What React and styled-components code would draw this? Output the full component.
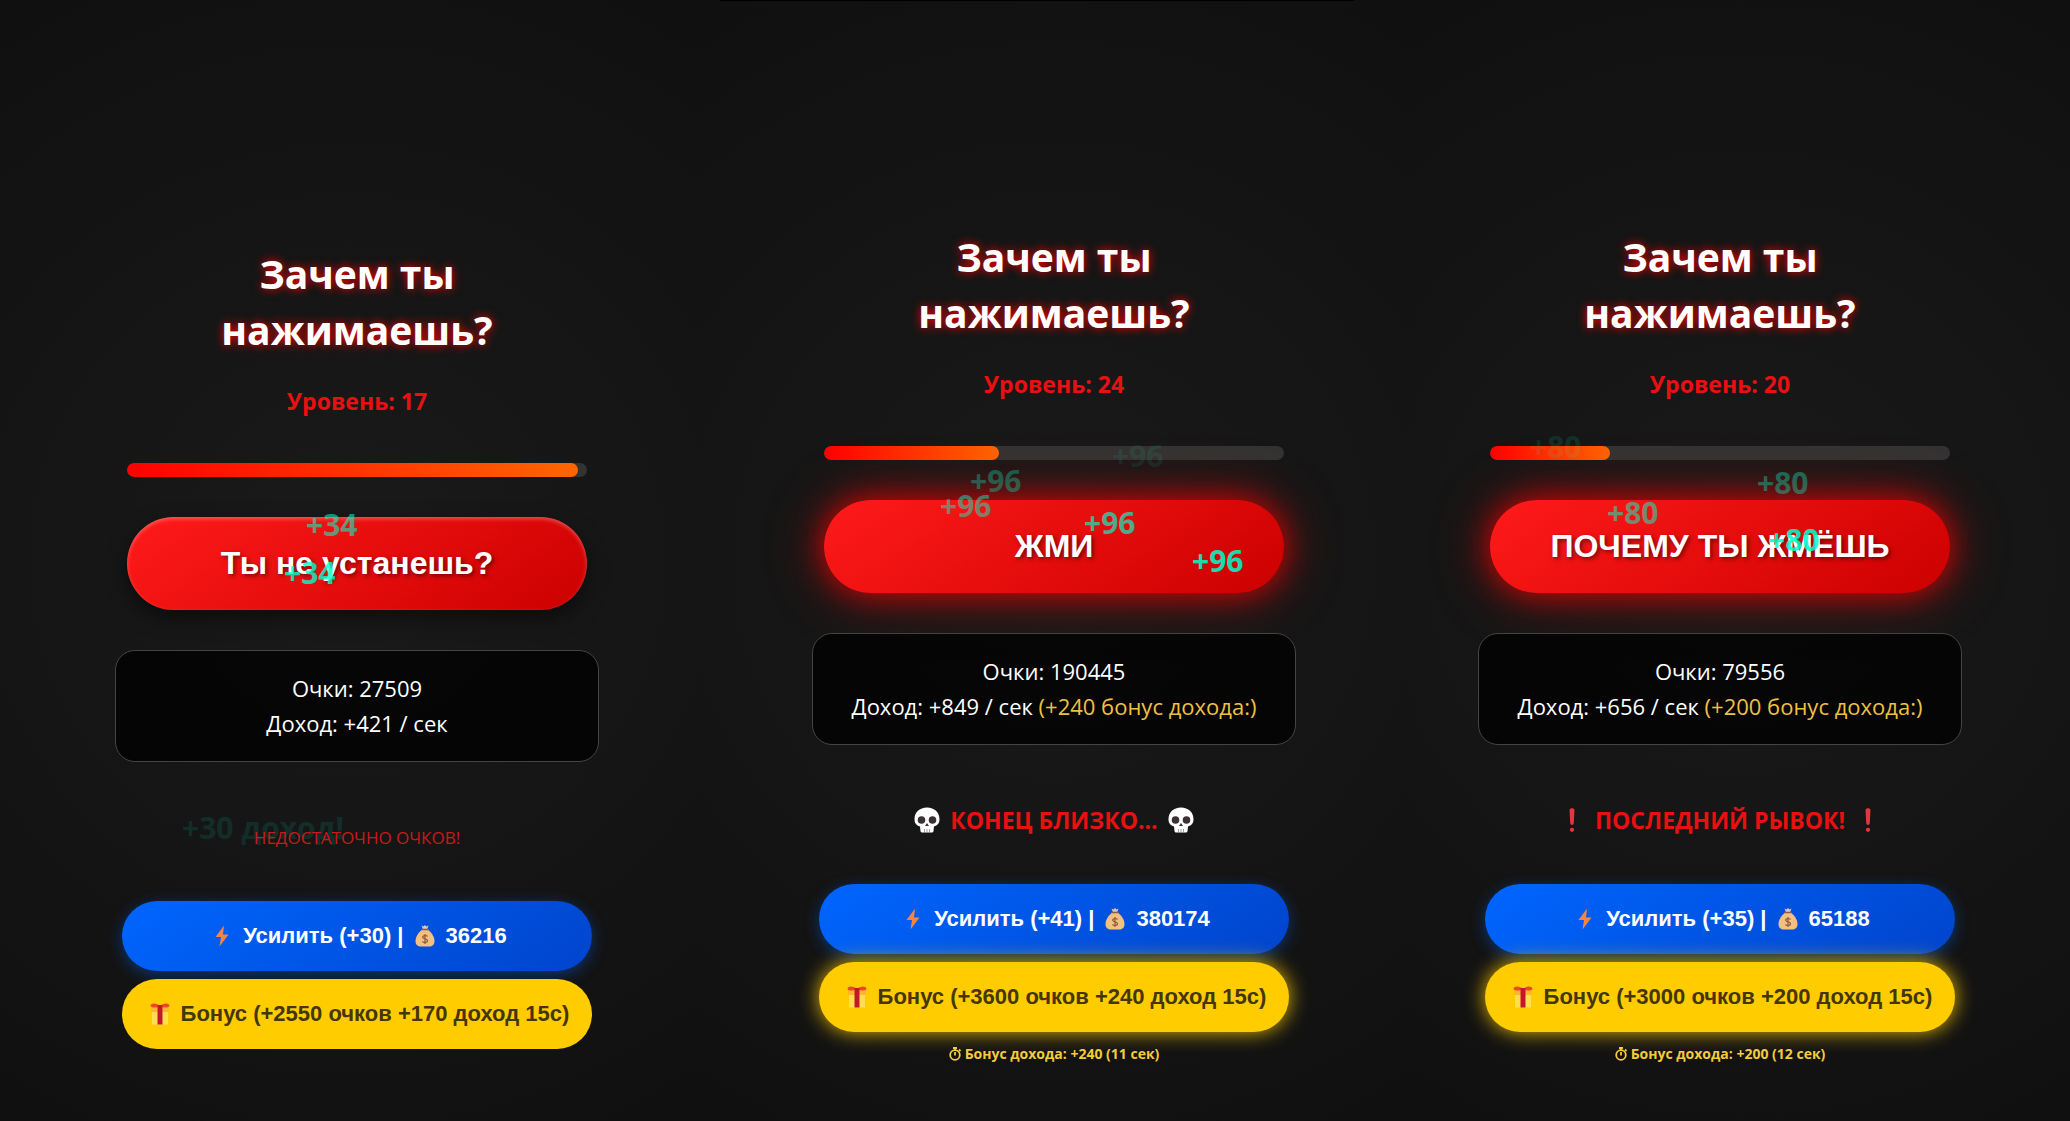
import React from "react";
import styled, { createGlobalStyle, css } from "styled-components";

const GlobalStyle = createGlobalStyle`
  * { box-sizing: border-box; }
  body {
    margin: 0;
    background: #101010;
    color: #fff;
    font-family: "Segoe UI", "Open Sans", "Noto Sans", sans-serif;
  }
`;

const Page = styled.main`
  display: grid;
  grid-template-columns: 696fr 716fr 658fr;
  min-height: 100vh;
  overflow: hidden;
`;

const edgeLine = "linear-gradient(#000, #000) 24px 0 / calc(100% - 82px) 1px no-repeat,";

const Panel = styled.section`
  display: flex;
  flex-direction: column;
  align-items: center;
  justify-content: center;
  padding: 174px ${(p) => p.$right || 0}px 0 ${(p) => p.$left || 0}px;
  background: ${(p) => (p.$edge ? edgeLine : "")} radial-gradient(circle at center, #1a1a1a, #101010);
`;

const Game = styled.div`
  position: relative;
  display: flex;
  flex-direction: column;
  align-items: center;
  width: 484px;
  max-width: 100%;
`;

const Title = styled.h1`
  margin: 0;
  width: 340px;
  font-size: 39px;
  line-height: 56px;
  font-weight: 700;
  text-align: center;
  text-shadow: 0 0 10px #ff0000;
`;

const Level = styled.p`
  margin: 27px 0 46px;
  font-size: 23px;
  line-height: 32px;
  font-weight: 700;
  color: #e81010;
`;

const Track = styled.div`
  width: 460px;
  height: 14px;
  border-radius: 10px;
  background: #333;
  overflow: hidden;
`;

const Fill = styled.div`
  height: 100%;
  border-radius: 10px;
  background: linear-gradient(90deg, #ff0000, #ff6600);
`;

const calm = css`
  box-shadow: 0 8px 20px rgba(0, 0, 0, 0.5), inset 0 2px 4px rgba(255, 255, 255, 0.3);
`;

const furious = css`
  box-shadow: 0 0 30px rgba(255, 0, 0, 0.75), 0 0 60px rgba(255, 0, 0, 0.4);
`;

const PressButton = styled.button`
  width: 460px;
  height: 93px;
  margin: 40px 0;
  border: 0;
  border-radius: 47px;
  background: linear-gradient(145deg, #ff1a1a, #cc0000);
  color: #fff;
  font: 700 32px "Liberation Sans", Arial, sans-serif;
  text-shadow: 2px 2px 4px rgba(0, 0, 0, 0.5);
  cursor: pointer;
  ${(p) => (p.$furious ? furious : calm)}
`;

const Stats = styled.div`
  width: 100%;
  padding: 20px;
  border: 1px solid #444;
  border-radius: 20px;
  background: rgba(0, 0, 0, 0.75);
  font-size: 22px;
  line-height: 35px;
  text-align: center;
  z-index: 1;
`;

const Extra = styled.span`
  color: #f0c040;
`;

const Message = styled.p`
  display: flex;
  align-items: center;
  gap: 7px;
  height: 64px;
  margin: 43px 0 32px;
  color: ${(p) => (p.$loud ? "#e81010" : "#c81a1a")};
  font-size: ${(p) => (p.$loud ? 23 : 17)}px;
  font-weight: ${(p) => (p.$loud ? 700 : 400)};
  white-space: nowrap;
  z-index: 1;
`;

const ShopButton = styled.button`
  display: flex;
  align-items: center;
  justify-content: center;
  gap: 6px;
  width: 470px;
  height: 70px;
  border: 0;
  border-radius: 35px;
  font: 700 22px "Liberation Sans", Arial, sans-serif;
  white-space: nowrap;
  cursor: pointer;
`;

const UpgradeButton = styled(ShopButton)`
  background: linear-gradient(145deg, #0066ff, #0044cc);
  color: #fff;
  box-shadow: 0 4px 15px rgba(0, 102, 255, 0.4);
`;

const BonusButton = styled(ShopButton)`
  margin-top: 8px;
  background: #ffcc00;
  color: #443606;
  box-shadow: ${(p) => (p.$active ? "0 0 20px rgba(255, 204, 0, 0.9)" : "none")};
`;

const Note = styled.p`
  display: flex;
  align-items: center;
  gap: 4px;
  margin: 10px 0 0;
  color: #f5cb3a;
  font-size: 14px;
  line-height: 24px;
  font-weight: 700;
`;

const Pop = styled.span`
  position: absolute;
  left: ${(p) => p.$x}px;
  top: ${(p) => p.$y}px;
  color: #00ffcc;
  font-size: 30px;
  line-height: 36px;
  font-weight: 700;
  white-space: nowrap;
  pointer-events: none;
  opacity: ${(p) => p.$fade};
`;

const Emoji = styled.svg`
  flex: none;
  width: ${(p) => p.$w}px;
  height: ${(p) => p.$h}px;
`;

const Bolt = () => (
  <Emoji $w={30} $h={22} viewBox="0 0 30 22" aria-hidden="true">
    <path d="M17 0.500 8.500 12 H14 L12.500 21.500 21.500 9.500 H16 Z" fill="#f58446" />
  </Emoji>
);

const MoneyBag = () => (
  <Emoji $w={30} $h={22} viewBox="0 0 30 22" aria-hidden="true">
    <path d="M11.500 0.500 13.500 1.500 15 0 16.500 1.500 18.500 0.500 17 4.500 H13 Z" fill="#d9c7bd" />
    <path d="M13 4 H17 C20.500 6.500 24.500 11 24.500 16 C24.500 20 22 21.500 19 21.500 H11 C8 21.500 5.500 20 5.500 16 C5.500 11 9.500 6.500 13 4 Z" fill="#f3c081" />
    <path d="M12 4.500 H18" stroke="#8d5a4c" strokeWidth="1.500" strokeLinecap="round" />
    <path d="M17.500 11.500 C17 10.200 12.700 10 12.700 12.200 C12.700 14.400 17.500 13.400 17.500 15.800 C17.500 18 13 18 12.500 16.300 M15 9 V19" fill="none" stroke="#8d5a3c" strokeWidth="1.200" />
  </Emoji>
);

const Gift = () => (
  <Emoji $w={30} $h={22} viewBox="0 0 30 22" aria-hidden="true">
    <path d="M7 8 H23 V21.500 H7 Z" fill="#ffde52" />
    <path d="M6 4 H24 V9 H6 Z" fill="#ffb62e" />
    <path d="M15 3.500 C12 -0.500 6 0 5.500 2.500 C5.500 5 11 5 15 3.500 C19 5 24.500 5 24.500 2.500 C24 0 18 -0.500 15 3.500 Z" fill="#ea4a1f" />
    <path d="M12.500 2 H17.500 V21.500 H12.500 Z" fill="#c4162c" />
  </Emoji>
);

const Skull = () => (
  <Emoji $w={32} $h={26} viewBox="0 0 32 26" aria-hidden="true">
    <path d="M16 0.500 C8.500 0.500 3.500 5.500 3.500 12 C3.500 16.500 5.500 18.500 9 19.500 L9.500 24 C9.600 25 10.500 25.500 11.500 25.500 H20.500 C21.500 25.500 22.400 25 22.500 24 L23 19.500 C26.500 18.500 28.500 16.500 28.500 12 C28.500 5.500 23.500 0.500 16 0.500 Z" fill="#fff" />
    <circle cx="10.500" cy="13" r="3.800" fill="#3a3035" />
    <circle cx="21.500" cy="13" r="3.800" fill="#3a3035" />
    <path d="M16 16 L18 19 H14 Z" fill="#3a3035" />
    <path d="M13.500 22 V25.500 M16 22 V25.500 M18.500 22 V25.500" stroke="#8c8589" strokeWidth="0.800" />
  </Emoji>
);

const Exclamation = () => (
  <Emoji $w={32} $h={26} viewBox="0 0 32 26" aria-hidden="true">
    <path d="M13.500 3 C13.500 0.500 18.500 0.500 18.500 3 L17.800 16 C17.700 18.500 14.300 18.500 14.200 16 Z" fill="#e0383e" />
    <circle cx="16" cy="22.800" r="2.100" fill="#e0383e" />
  </Emoji>
);

const Stopwatch = () => (
  <Emoji $w={12} $h={14} viewBox="0 0 12 14" aria-hidden="true" fill="none" stroke="#f5cb3a">
    <circle cx="6" cy="8" r="4.800" strokeWidth="1.800" />
    <path d="M4 1 H8 M6 1 V3 M10 2.500 11.500 4 M6 5 V8.500" strokeWidth="1.800" />
  </Emoji>
);

const emblems = { skull: Skull, exclamation: Exclamation };

const games = [
  {
    level: 17, progress: 98, label: "Ты не устанешь?", score: 27509, income: 421,
    message: "НЕДОСТАТОЧНО ОЧКОВ!", power: 30, price: 36216, bonus: 2550, boost: 170, left: 18,
    pops: [
      { text: "+34", x: 191, y: 261, fade: 0.55 },
      { text: "+34", x: 169, y: 309, fade: 0.8 },
      { text: "+30 доход!", x: 67, y: 564, fade: 0.1 },
    ],
  },
  {
    level: 24, progress: 38, label: "ЖМИ", score: 190445, income: 849, extra: 240,
    message: "КОНЕЦ БЛИЗКО...", emblem: "skull", power: 41, price: 380174, bonus: 3600, boost: 240,
    seconds: 11, edge: true,
    pops: [
      { text: "+96", x: 300, y: 209, fade: 0.08 },
      { text: "+96", x: 158, y: 234, fade: 0.3 },
      { text: "+96", x: 128, y: 259, fade: 0.45 },
      { text: "+96", x: 272, y: 276, fade: 0.65 },
      { text: "+96", x: 380, y: 314, fade: 0.85 },
    ],
  },
  {
    level: 20, progress: 26, label: "ПОЧЕМУ ТЫ ЖМЁШЬ", score: 79556, income: 656, extra: 200,
    message: "ПОСЛЕДНИЙ РЫВОК!", emblem: "exclamation", power: 35, price: 65188, bonus: 3000, boost: 200,
    seconds: 12, right: 42,
    pops: [
      { text: "+80", x: 52, y: 200, fade: 0.1 },
      { text: "+80", x: 279, y: 236, fade: 0.35 },
      { text: "+80", x: 129, y: 266, fade: 0.5 },
      { text: "+80", x: 290, y: 293, fade: 0.85 },
    ],
  },
];

function Clicker({ game }) {
  const Emblem = emblems[game.emblem];
  return (
    <Panel $left={game.left} $right={game.right} $edge={game.edge}>
      <Game>
        <Title>Зачем ты нажимаешь?</Title>
        <Level>Уровень: {game.level}</Level>
        <Track role="progressbar" aria-label="Уровень" aria-valuenow={game.progress}>
          <Fill style={{ width: `${game.progress}%` }} />
        </Track>
        <PressButton type="button" $furious={Boolean(game.extra)}>{game.label}</PressButton>
        <Stats>
          <div>Очки: {game.score}</div>
          <div>
            Доход: +{game.income} / сек
            {game.extra && <Extra> (+{game.extra} бонус дохода:)</Extra>}
          </div>
        </Stats>
        <Message $loud={Boolean(Emblem)}>
          {Emblem && <Emblem />}
          {game.message}
          {Emblem && <Emblem />}
        </Message>
        <UpgradeButton type="button">
          <Bolt />
          <span>Усилить (+{game.power}) |</span>
          <MoneyBag />
          <span>{game.price}</span>
        </UpgradeButton>
        <BonusButton type="button" $active={Boolean(game.extra)}>
          <Gift />
          <span>Бонус (+{game.bonus} очков +{game.boost} доход 15с)</span>
        </BonusButton>
        {game.seconds && (
          <Note>
            <Stopwatch />
            <span>Бонус дохода: +{game.extra} ({game.seconds} сек)</span>
          </Note>
        )}
        {game.pops.map((pop, i) => (
          <Pop key={i} $x={pop.x} $y={pop.y} $fade={pop.fade}>{pop.text}</Pop>
        ))}
      </Game>
    </Panel>
  );
}

export default function App() {
  return (
    <>
      <GlobalStyle />
      <Page>
        {games.map((game) => (
          <Clicker key={game.level} game={game} />
        ))}
      </Page>
    </>
  );
}
